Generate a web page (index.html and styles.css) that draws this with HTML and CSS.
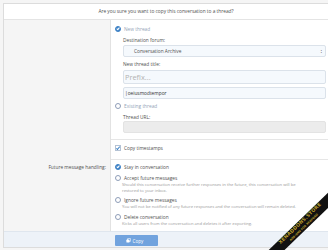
FILE: index.html
```html
<!DOCTYPE html>
<html lang="en">
<head>
<meta charset="UTF-8">
<title>Copy conversation</title>
<link rel="stylesheet" href="styles.css">
</head>
<body>
  <div class="overlay">
    <div class="overlay-title">Are you sure you want to copy this conversation to a thread?</div>

    <div class="form-row">
      <div class="row-label"></div>
      <div class="row-input">
        <div class="choice muted"><span class="radio on"></span>New thread</div>
        <div class="sub">
          <div class="field-label">Destination forum:</div>
          <div class="select">Conversation Archive<span class="arrows">&#9650;<br>&#9660;</span></div>
          <div class="field-label">New thread title:</div>
          <div class="input prefix">Prefix...</div>
          <div class="input typed">|oeiusmodtempor</div>
        </div>
        <div class="choice muted"><span class="radio"></span>Existing thread</div>
        <div class="sub">
          <div class="field-label">Thread URL:</div>
          <div class="input disabled"></div>
        </div>
      </div>
    </div>

    <div class="form-row sep short">
      <div class="row-label"></div>
      <div class="row-input">
        <div class="choice"><span class="check"></span>Copy timestamps</div>
      </div>
    </div>

    <div class="form-row sep last">
      <div class="row-label">Future message handling:</div>
      <div class="row-input">
        <div class="choice"><span class="radio on"></span>Stay in conversation</div>
        <div class="choice"><span class="radio"></span>Accept future messages</div>
        <div class="hint">Should this conversation receive further responses in the future, this conversation will be restored to your inbox.</div>
        <div class="choice"><span class="radio"></span>Ignore future messages</div>
        <div class="hint">You will not be notified of any future responses and the conversation will remain deleted.</div>
        <div class="choice delete"><span class="radio"></span>Delete conversation</div>
        <div class="hint">Kicks all users from the conversation and deletes it after exporting.</div>
      </div>
    </div>

    <div class="form-footer">
      <div class="row-label"></div>
      <div class="row-input">
        <button class="button">
          <svg class="copy-icon" viewBox="0 0 10 10" width="5" height="5">
            <rect x="3" y="0.8" width="6.2" height="6.2" rx="1.4" fill="none" stroke="#fff" stroke-width="1.3"/>
            <rect x="0.8" y="3" width="6.2" height="6.2" rx="1.4" fill="#fff"/>
          </svg>Copy
        </button>
      </div>
    </div>
  </div>

  <!-- watermark ribbon over the corner -->
  <div class="corner">
    <div class="ribbon">
      <span class="ribbon-main">XENADDONS.STORE</span>
      <span class="ribbon-sub">ADD-ONS FOR XENFORO</span>
    </div>
  </div>
</body>
</html>
```

FILE: styles.css
```css
html, body {
  margin: 0;
  padding: 0;
}
body {
  width: 328px;
  height: 250px;
  overflow: hidden;
  position: relative;
  background: #f5f5f5;
  font-family: "Open Sans", sans-serif;
  font-size: 4.8px;
  color: #505050;
  padding: 3px 0 0 3px;
  box-sizing: border-box;
}

.overlay {
  width: 325px;
  box-sizing: border-box;
  border: 1px solid #dcdcdc;
  border-right: none;
  background: #fff;
}
.overlay-title {
  height: 15px;
  line-height: 15px;
  text-align: center;
  border-bottom: 1px solid #e4e4e4;
}

/* rows */
.form-row {
  display: flex;
}
.row-label {
  width: 107px;
  flex: none;
  background: #f5f5f5;
  border-right: 1px solid #e2e2e2;
  text-align: right;
  padding: 5px 4px 0 0;
  box-sizing: border-box;
  line-height: 8px;
}
.row-input {
  flex: 1;
  padding: 5px 2px 6px 4px;
}
.form-row.sep .row-input {
  border-top: 1px solid #e6e6e6;
}
.form-row.short .row-input {
  padding: 4px 2px 7px 4px;
}
.form-row.last .row-label {
  padding-top: 4px;
}
.form-row.last .row-input {
  padding: 3px 2px 4px 4px;
}

.choice {
  display: flex;
  align-items: center;
  height: 8px;
  line-height: 8px;
  margin-top: 3px;
}
.choice:first-child {
  margin-top: 0;
}
.choice.muted {
  color: #94a4b8;
}
.choice.delete {
  margin-top: 4px;
}
.radio {
  width: 4px;
  height: 4px;
  border: 1px solid #8e9db8;
  border-radius: 50%;
  margin-right: 3px;
  flex: none;
  position: relative;
}
.radio.on {
  background: #3e82c6;
  border-color: #3e82c6;
}
.radio.on::after {
  content: "";
  position: absolute;
  left: 1.3px;
  top: 0.4px;
  width: 1.2px;
  height: 2.2px;
  border: solid #fff;
  border-width: 0 0.8px 0.8px 0;
  transform: rotate(40deg);
}
.check {
  width: 4px;
  height: 4px;
  border: 1px solid #b4c2d4;
  margin-right: 3px;
  flex: none;
  position: relative;
}
.check::after {
  content: "";
  position: absolute;
  left: 1.3px;
  top: -0.4px;
  width: 1.4px;
  height: 3px;
  border: solid #3e82c6;
  border-width: 0 0.9px 0.9px 0;
  transform: rotate(40deg);
}

.sub {
  padding-left: 8px;
}
.field-label {
  line-height: 8px;
  margin-top: 3px;
}
.select, .input {
  height: 10px;
  line-height: 10px;
  border: 1px solid #dbe2ea;
  border-radius: 2px;
  background: #f5f9fd;
  box-sizing: content-box;
  padding: 0 3px;
}
.select {
  display: flex;
  justify-content: space-between;
  margin: 1px 0 1px;
  padding-left: 10px;
}
.arrows {
  font-size: 1.6px;
  line-height: 2px;
  padding-top: 3px;
  color: #333;
}
.field-label + .input {
  margin-top: 2px;
}
.input.prefix {
  height: 12px;
  line-height: 12px;
  font-size: 7.4px;
  color: #b2b2b2;
  padding-left: 1px;
}
.input.typed {
  margin-top: 3px;
  color: #333;
  padding-left: 1px;
}
.input.disabled {
  background: #ececec;
  border-color: #e3e3e3;
  margin-top: 0;
}

.hint {
  color: #9a9a9a;
  font-size: 4.2px;
  line-height: 6px;
  padding-left: 7px;
  width: 186px;
  margin-bottom: -1px;
}
.hint:last-child {
  margin-bottom: 0;
}

/* footer */
.form-footer {
  display: flex;
  background: #edf2f8;
  border-top: 1px solid #dfe6ee;
}
.form-footer .row-label {
  background: transparent;
  border-right: none;
}
.form-footer .row-input {
  padding: 3px 0 1px 4px;
}
.button {
  display: flex;
  align-items: center;
  gap: 2px;
  height: 11px;
  width: 43px;
  justify-content: center;
  padding: 0 4px 0 0;
  border: none;
  border-radius: 1px;
  background: #71a3de;
  color: #fff;
  font-family: "Open Sans", sans-serif;
  font-size: 4.6px;
}

/* watermark */
.corner {
  position: absolute;
  right: 0;
  bottom: 0;
  width: 70px;
  height: 70px;
  overflow: hidden;
}
.ribbon {
  position: absolute;
  left: -16px;
  top: 40px;
  width: 120px;
  height: 11px;
  background: #111;
  transform: rotate(-44deg);
  display: flex;
  flex-direction: column;
  align-items: center;
  justify-content: center;
  color: #b89c2c;
  font-family: "DejaVu Sans", sans-serif;
  font-weight: bold;
  line-height: 1;
}
.ribbon-main {
  font-size: 4.8px;
  letter-spacing: 0.2px;
}
.ribbon-sub {
  font-size: 2.8px;
  margin-top: 0.6px;
}
```
